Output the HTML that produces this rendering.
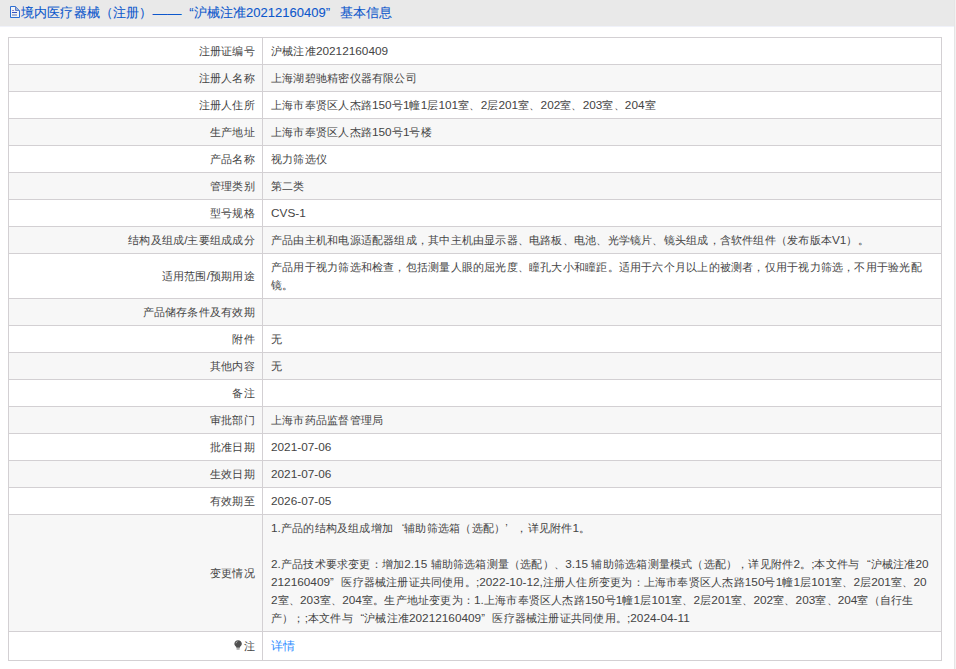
<!DOCTYPE html>
<html><head><meta charset="utf-8">
<style>
html,body{margin:0;padding:0;background:#fff;width:956px;height:669px;overflow:hidden;}
body{font-family:"Liberation Sans",sans-serif;font-size:11px;letter-spacing:0.22px;color:#444;position:relative;}
i{font-style:normal;font-size:11.8px;letter-spacing:0;}
b{font-weight:normal;display:inline-block;width:11.22px;letter-spacing:0;}
b.ql{text-align:right;}
b.qr{text-align:left;}
.hdr{position:absolute;left:0;top:0;width:954px;height:27px;background:#e9e9e9;border-bottom:1px solid #f0f2fa;box-sizing:border-box;}
.hdr .ic{position:absolute;left:10px;top:6px;}
.hdr .t{position:absolute;left:21px;top:2.5px;font-size:13px;letter-spacing:0.15px;line-height:20px;color:#0d58cc;white-space:nowrap;-webkit-text-stroke:0.1px #0d58cc;}
.hdr .t i{font-size:13px;}
.hdr .t b{width:12px;}
.hdr .t b.qr{width:14px;}
.dash{display:inline-block;width:29px;font-size:14.5px;letter-spacing:0;vertical-align:top;}
.sb{position:absolute;left:954px;top:0;width:1px;height:669px;background:#e5e5e5;border-right:1px solid #f2f2f2;}
.tbl{position:absolute;left:8px;top:37px;width:934px;height:624px;}
.row{position:absolute;left:0;width:932px;border:1px solid #d3d0d3;background:#fff;box-sizing:content-box;}
.row.g{background:#f7f7f7;}
.row .l{position:absolute;left:0;top:0;width:245.8px;height:100%;display:flex;align-items:center;justify-content:flex-end;white-space:nowrap;line-height:18px;}
.row .v{position:absolute;left:262px;top:0;right:0;height:100%;display:flex;align-items:center;white-space:nowrap;line-height:18px;}
.row .v{display:block;padding-top:4px;box-sizing:border-box;}
.vl{position:absolute;left:254px;top:0;width:1px;height:624px;background:#d3d0d3;}
a{color:#2d8cff;text-decoration:none;font-size:12px;letter-spacing:0;position:relative;top:0.5px;}
.bulb{display:inline-block;width:8.2px;height:10px;margin-right:1.6px;position:relative;top:-1px;}

</style></head><body>
<div class="hdr"><svg class="ic" width="10" height="12" viewBox="0 0 10 12"><path d="M0.5 11.5V0.5H5.5L9.5 4.5V11.5Z" fill="#f4f4f6" stroke="#2b6fd4" stroke-width="1"/><path d="M5.5 0.5V4.5H9.5" fill="#9bb0d8" stroke="#5f7fc8" stroke-width="1"/><rect x="2" y="4" width="2" height="1" fill="#8c84c8"/><rect x="2" y="6" width="5" height="1" fill="#3552c0"/><rect x="2" y="8" width="5" height="2" fill="#a8b4d4"/></svg><div class="t">境内医疗器械（注册）<i><span class="dash">——</span></i><b class="ql">“</b>沪械注准<i>20212160409</i><b class="qr">”</b>基本信息</div></div>
<div class="sb"></div>
<div class="tbl">
<div class="row" style="top:0px;height:26px">
<div class="l">注册证编号</div><div class="v">沪械注准<i>20212160409</i></div>
</div>
<div class="row g" style="top:27px;height:26px">
<div class="l">注册人名称</div><div class="v">上海湖碧驰精密仪器有限公司</div>
</div>
<div class="row" style="top:54px;height:26px">
<div class="l">注册人住所</div><div class="v">上海市奉贤区人杰路<i>150</i>号<i>1</i>幢<i>1</i>层<i>101</i>室、<i>2</i>层<i>201</i>室、<i>202</i>室、<i>203</i>室、<i>204</i>室</div>
</div>
<div class="row g" style="top:81px;height:26px">
<div class="l">生产地址</div><div class="v">上海市奉贤区人杰路<i>150</i>号<i>1</i>号楼</div>
</div>
<div class="row" style="top:108px;height:26px">
<div class="l">产品名称</div><div class="v">视力筛选仪</div>
</div>
<div class="row g" style="top:135px;height:26px">
<div class="l">管理类别</div><div class="v">第二类</div>
</div>
<div class="row" style="top:162px;height:26px">
<div class="l">型号规格</div><div class="v"><i>CVS-1</i></div>
</div>
<div class="row g" style="top:189px;height:26px">
<div class="l">结构及组成<i>/</i>主要组成成分</div><div class="v">产品由主机和电源适配器组成，其中主机由显示器、电路板、电池、光学镜片、镜头组成，含软件组件（发布版本<i>V1</i>）。</div>
</div>
<div class="row" style="top:216px;height:44px">
<div class="l">适用范围<i>/</i>预期用途</div><div class="v">产品用于视力筛选和检查，包括测量人眼的屈光度、瞳孔大小和瞳距。适用于六个月以上的被测者，仅用于视力筛选，不用于验光配<br>镜。</div>
</div>
<div class="row g" style="top:261px;height:26px">
<div class="l">产品储存条件及有效期</div><div class="v"></div>
</div>
<div class="row" style="top:288px;height:26px">
<div class="l">附件</div><div class="v">无</div>
</div>
<div class="row g" style="top:315px;height:26px">
<div class="l">其他内容</div><div class="v">无</div>
</div>
<div class="row" style="top:342px;height:26px">
<div class="l">备注</div><div class="v"></div>
</div>
<div class="row g" style="top:369px;height:26px">
<div class="l">审批部门</div><div class="v">上海市药品监督管理局</div>
</div>
<div class="row" style="top:396px;height:26px">
<div class="l">批准日期</div><div class="v"><i>2021-07-06</i></div>
</div>
<div class="row g" style="top:423px;height:26px">
<div class="l">生效日期</div><div class="v"><i>2021-07-06</i></div>
</div>
<div class="row" style="top:450px;height:26px">
<div class="l">有效期至</div><div class="v"><i>2026-07-05</i></div>
</div>
<div class="row g" style="top:477px;height:116px">
<div class="l">变更情况</div><div class="v"><i>1.</i>产品的结构及组成增加<b class="ql">‘</b>辅助筛选箱（选配）<b class="qr">’</b>，详见附件<i>1</i>。<br><br><i>2.</i>产品技术要求变更：增加<i>2.15 </i>辅助筛选箱测量（选配）、<i>3.15 </i>辅助筛选箱测量模式（选配），详见附件<i>2</i>。<i>;</i>本文件与<b class="ql">“</b>沪械注准<i>20</i><br><i>212160409</i><b class="qr">”</b>医疗器械注册证共同使用。<i>;2022-10-12,</i>注册人住所变更为：上海市奉贤区人杰路<i>150</i>号<i>1</i>幢<i>1</i>层<i>101</i>室、<i>2</i>层<i>201</i>室、<i>20</i><br><i>2</i>室、<i>203</i>室、<i>204</i>室。生产地址变更为：<i>1.</i>上海市奉贤区人杰路<i>150</i>号<i>1</i>幢<i>1</i>层<i>101</i>室、<i>2</i>层<i>201</i>室、<i>202</i>室、<i>203</i>室、<i>204</i>室（自行生<br>产）；<i>;</i>本文件与<b class="ql">“</b>沪械注准<i>20212160409</i><b class="qr">”</b>医疗器械注册证共同使用。<i>;2024-04-11</i></div>
</div>
<div class="row" style="top:594px;height:28px">
<div class="l"><svg class="bulb" width="8.2" height="10" viewBox="0 0 9 11"><path d="M4.5 0.3C2.2 0.3 0.4 2 0.4 4.2C0.4 5.8 1.4 6.9 2.5 7.8V8.6H6.5V7.8C7.6 6.9 8.6 5.8 8.6 4.2C8.6 2 6.8 0.3 4.5 0.3Z" fill="#505050"/><rect x="2.8" y="9" width="3.4" height="1.6" fill="#9a9a9a"/><path d="M2.2 3.6C2.3 2.6 3 1.9 3.8 1.7" stroke="#c8c8c8" stroke-width="0.9" fill="none"/></svg>注</div><div class="v"><a>详情</a></div>
</div>
<div class="vl"></div>
</div>
</body></html>
